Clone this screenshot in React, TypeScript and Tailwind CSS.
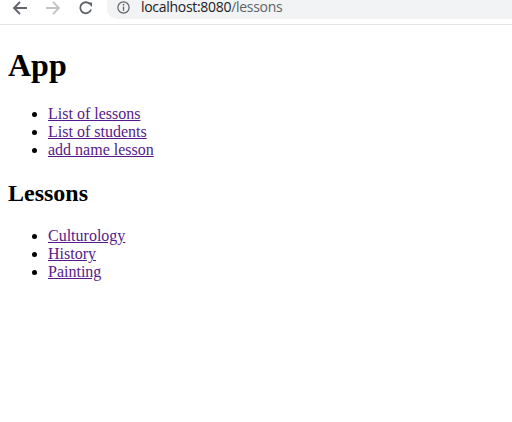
const BackIcon = ({ color }: { color: string }) => (
  <svg width="16" height="16" viewBox="0 0 16 16" fill="none">
    <path d="M15 8H2M8 2L2 8l6 6" stroke={color} strokeWidth="1.8" />
  </svg>
);

const ForwardIcon = ({ color }: { color: string }) => (
  <svg width="16" height="16" viewBox="0 0 16 16" fill="none">
    <path d="M1 8h13M8 2l6 6-6 6" stroke={color} strokeWidth="1.8" />
  </svg>
);

const ReloadIcon = () => (
  <svg width="16" height="16" viewBox="0 0 16 16" fill="none">
    <path d="M13 9.5A5.5 5.5 0 1 1 11.8 4" stroke="#5f6368" strokeWidth="1.8" />
    <path d="M9.5 2.5H14V7z" fill="#5f6368" />
  </svg>
);

const InfoIcon = () => (
  <svg width="13" height="13" viewBox="0 0 13 13" fill="none">
    <circle cx="6.5" cy="6.5" r="5.6" stroke="#5f6368" strokeWidth="1.2" />
    <path d="M6.5 5.6v4.2" stroke="#5f6368" strokeWidth="1.3" />
    <circle cx="6.5" cy="3.7" r="0.85" fill="#5f6368" />
  </svg>
);

const Toolbar = () => (
  <div className="flex h-[25px] items-start border-b border-[#e3e3e3] bg-white">
    <div className="mt-[-2px] flex h-[20px] items-center gap-[17px] pl-[12px]">
      <BackIcon color="#5f6368" />
      <ForwardIcon color="#c2c4c7" />
      <ReloadIcon />
    </div>
    <div className="ml-[13px] flex h-[19px] flex-1 items-start rounded-bl-[10px] bg-[#f1f3f4] pl-[10px] font-['Open_Sans',sans-serif] text-[14px] leading-[14px] tracking-[-0.3px]">
      <div className="flex h-[14px] items-center">
        <InfoIcon />
        <span className="ml-[11px] text-[#202124]">localhost:8080</span>
        <span className="text-[#5f6368]">/lessons</span>
      </div>
    </div>
  </div>
);

const lessons = ["Culturology", "History", "Painting"];

export default function App() {
  return (
    <div className="h-[422px] w-[512px] overflow-hidden bg-white">
      <Toolbar />
      <div className="px-2 font-['Liberation_Serif','Times_New_Roman',serif] text-[16px] leading-[normal] text-black">
        <h1 className="mt-[22px] mb-[21px] text-[32px] font-bold leading-[normal]">App</h1>
        <ul className="list-disc pl-[40px]">
          <li><a href="#" className="text-[#551a8b] underline">List of lessons</a></li>
          <li><a href="#" className="text-[#551a8b] underline">List of students</a></li>
          <li><a href="#" className="text-[#551a8b] underline">add name lesson</a></li>
        </ul>
        <h2 className="mt-[21px] mb-[20px] text-[24px] font-bold leading-[normal]">Lessons</h2>
        <ul className="list-disc pl-[40px]">
          {lessons.map((lesson) => (
            <li key={lesson}>
              <a href="#" className="text-[#551a8b] underline">{lesson}</a>
            </li>
          ))}
        </ul>
      </div>
    </div>
  );
}
